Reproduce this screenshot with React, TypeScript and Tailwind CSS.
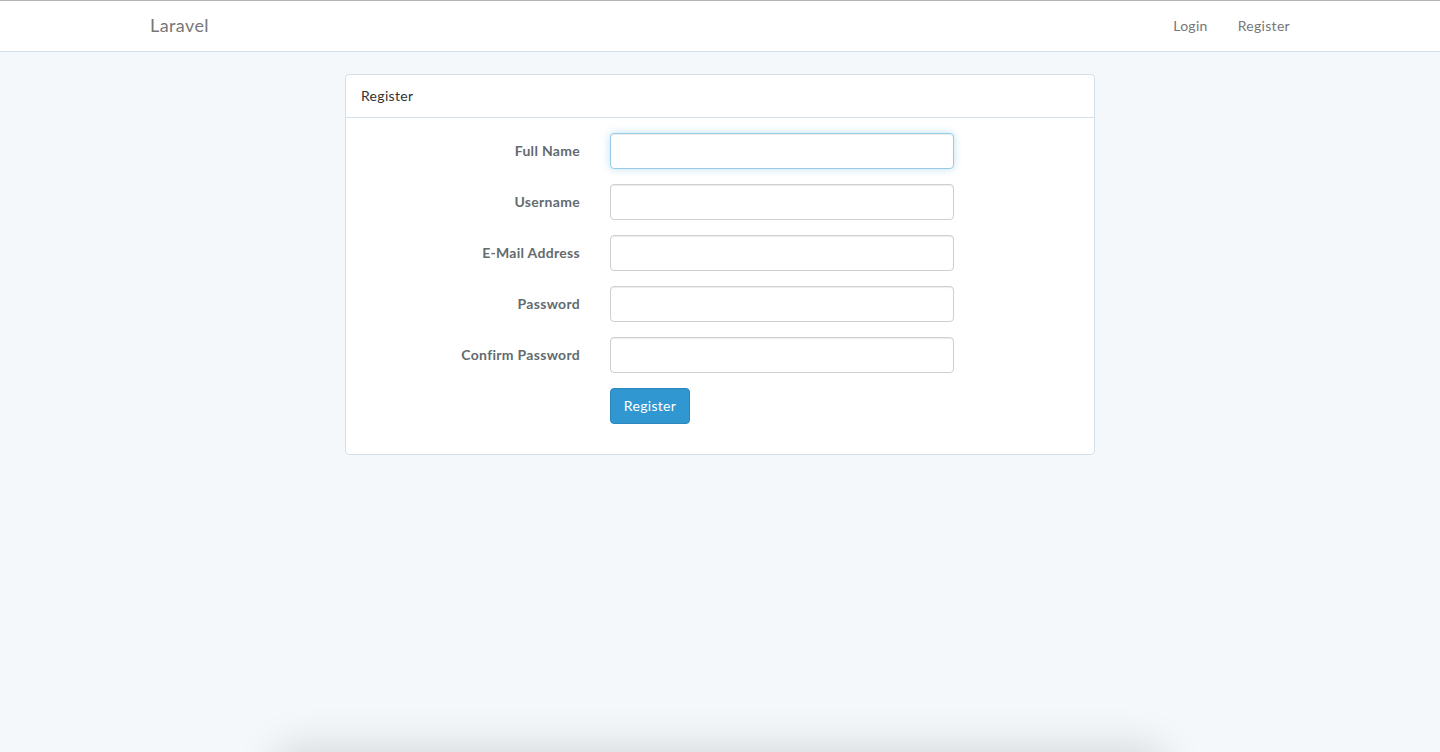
import React, { useState } from 'react';

const fields = [
    { label: 'Full Name', type: 'text', focused: true },
    { label: 'Username', type: 'text' },
    { label: 'E-Mail Address', type: 'email' },
    { label: 'Password', type: 'password' },
    { label: 'Confirm Password', type: 'password' },
];

const App: React.FC = () => {
    const [values, setValues] = useState<Record<string, string>>({});

    return (
        <div className="min-h-screen bg-[#f5f8fa] border-t border-[#b3b3b3] font-['Lato','Open_Sans',sans-serif] text-[14px] tracking-[0.3px] text-[#636b6f] relative overflow-hidden">
            {/* Navbar */}
            <nav className="h-[51px] bg-white border-b border-[#d3e0e9]">
                <div className="w-[1170px] mx-auto px-[15px] h-full flex items-center justify-between pb-[2px]">
                    <a className="text-[18px] text-[#777] tracking-[0.4px]">Laravel</a>
                    <div className="flex items-center">
                        <a className="px-[15px] text-[#777]">Login</a>
                        <a className="pl-[15px] text-[#777]">Register</a>
                    </div>
                </div>
            </nav>

            {/* Content */}
            <div className="w-[750px] mx-auto mt-[22px] bg-white border border-[#d3e0e9] rounded-[4px]">
                <div className="h-[43px] px-[15px] flex items-center border-b border-[#d3e0e9] text-[#333] pb-[1px]">
                    Register
                </div>
                <form className="p-[15px]" onSubmit={(e) => e.preventDefault()}>
                    {fields.map((f) => (
                        <div key={f.label} className="flex items-center mb-[15px]">
                            <label className="w-[219px] text-right font-bold text-[#636b6f] pb-[2px]">{f.label}</label>
                            <input
                                type={f.type}
                                value={values[f.label] || ''}
                                onChange={(e) => setValues({ ...values, [f.label]: e.target.value })}
                                className={
                                    f.focused
                                        ? 'ml-[30px] w-[344px] h-[36px] px-3 rounded-[4px] border border-[#98cbe8] bg-white outline-none shadow-[inset_0_1px_1px_rgba(0,0,0,0.075),0_0_8px_rgba(152,203,232,0.6)]'
                                        : 'ml-[30px] w-[344px] h-[36px] px-3 rounded-[4px] border border-[#ccd0d2] bg-white outline-none shadow-[inset_0_1px_1px_rgba(0,0,0,0.075)]'
                                }
                            />
                        </div>
                    ))}
                    <div className="flex mb-[15px]">
                        <div className="w-[219px]" />
                        <button
                            type="submit"
                            className="ml-[30px] h-[36px] w-[80px] pb-[2px] rounded-[4px] bg-[#3097d1] border border-[#2a88bd] text-white"
                        >
                            Register
                        </button>
                    </div>
                </form>
            </div>

            {/* window shadow peeking at the bottom */}
            <div className="absolute left-[290px] right-[290px] top-[760px] h-10 rounded-lg bg-[#e0e1e3] shadow-[0_0_40px_16px_rgba(0,0,0,0.12)]" />
        </div>
    );
};

export default App;
